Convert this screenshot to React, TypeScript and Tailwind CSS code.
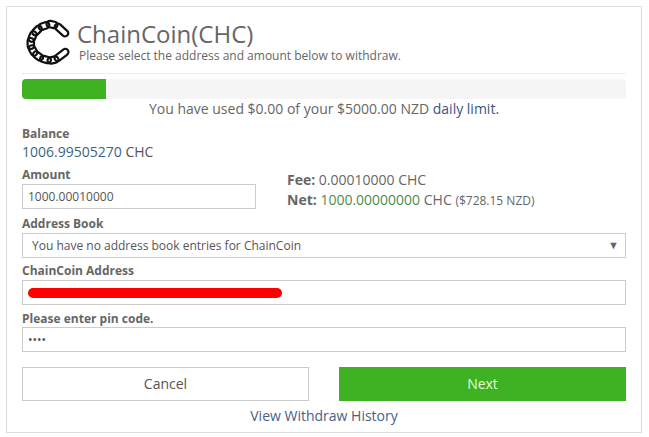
import { FC } from "react";

const font = "font-['Open_Sans',sans-serif]";

const ChainLink: FC<{ x: number; y: number; angle: number; length?: number }> = ({ x, y, angle, length = 11 }) => (
  <rect
    x={x - length / 2}
    y={y - 3.2}
    width={length}
    height={6.4}
    rx={3.2}
    fill="none"
    stroke="#111"
    strokeWidth={2.2}
    transform={`rotate(${angle} ${x} ${y})`}
  />
);

const Logo: FC = () => (
  <svg width="44" height="46" viewBox="0 0 44 46" className="shrink-0">
    <ChainLink x={35.5} y={11} angle={42} length={16} />
    <ChainLink x={26} y={5.5} angle={10} />
    <ChainLink x={18} y={7} angle={-20} />
    <ChainLink x={11} y={11.5} angle={-45} />
    <ChainLink x={6.5} y={17.5} angle={-68} />
    <ChainLink x={4.8} y={24.5} angle={88} />
    <ChainLink x={7} y={31.5} angle={62} />
    <ChainLink x={12} y={37} angle={38} />
    <ChainLink x={19.5} y={40.5} angle={14} />
    <ChainLink x={27} y={41} angle={-12} />
    <ChainLink x={35.5} y={36} angle={-38} length={16} />
  </svg>
);

const Label: FC<{ text: string; className?: string }> = ({ text, className = "" }) => (
  <div className={`text-[12px] leading-[17px] font-bold text-[#666] ${className}`}>{text}</div>
);

const Field: FC<{ children?: React.ReactNode; className?: string }> = ({ children, className = "" }) => (
  <div className={`h-[25px] border border-[#ccc] bg-white flex items-center text-[12px] text-[#555] ${className}`}>
    {children}
  </div>
);

export default function App() {
  return (
    <div className={`${font} w-[649px] h-[437px] bg-white pt-[6px] pl-[6px] text-[#555]`}>
      <div className="w-[636px] h-[427px] border border-[#ddd] px-[15px] pt-[12px]">
        <div className="flex h-[47px] pl-[4px]">
          <Logo />
          <div className="ml-[7px]">
            <div className="text-[24px] leading-[30px] text-[#666]">ChainCoin(CHC)</div>
            <div className="ml-[2px] text-[12px] leading-[16px] mt-[-1px] text-[#666]">
              Please select the address and amount below to withdraw.
            </div>
          </div>
        </div>
        <div className="mt-[7px] border-t border-[#eee]" />
        <div className="mt-[5px] h-[20px] rounded-[4px] bg-[#f5f5f5] overflow-hidden">
          <div className="h-full w-[84px] bg-[#3eb223]" />
        </div>
        <div className="text-center text-[14px] leading-[20px] text-[#666]">
          You have used $0.00 of your $5000.00 NZD <span className="text-[#3b5480]">daily limit.</span>
        </div>
        <Label text="Balance" className="mt-[6px]" />
        <div className="text-[14px] leading-[20px] text-[#3a6485]">
          1006.99505270 <span className="text-[#555]">CHC</span>
        </div>
        <div className="mt-[4px] flex h-[43px]">
          <div className="w-[234px]">
            <Label text="Amount" />
            <Field className="mt-[1px] px-[5px]">1000.00010000</Field>
          </div>
          <div className="ml-[31px] text-[14px] leading-[20px] pt-[4px] text-[#666]">
            <div>
              <b className="font-bold">Fee:</b> 0.00010000 CHC
            </div>
            <div>
              <b className="font-bold">Net:</b> <span className="text-[#4f8a50]">1000.00000000</span> CHC{" "}
              <span className="text-[12px]">($728.15 NZD)</span>
            </div>
          </div>
        </div>
        <Label text="Address Book" className="mt-[6px]" />
        <Field className="justify-between pl-[9px] pr-[6px] mt-[1px]">
          <span>You have no address book entries for ChainCoin</span>
          <span className="text-[11px] text-[#666]">▼</span>
        </Field>
        <Label text="ChainCoin Address" className="mt-[4px]" />
        <Field className="mt-[1px] px-[5px]">
          <div className="h-[10px] w-[254px] rounded-full bg-[#f00]" />
        </Field>
        <Label text="Please enter pin code." className="mt-[5px]" />
        <Field className="px-[5px] text-[10px]">••••</Field>
        <div className="mt-[15px] flex justify-between">
          <div className="h-[34px] w-[287px] border border-[#ccc] pb-[1px] flex items-center justify-center text-[14px] text-[#555]">
            Cancel
          </div>
          <div className="h-[34px] w-[287px] bg-[#3eb223] pb-[1px] flex items-center justify-center text-[14px] font-medium text-[#e4fbd8]">
            Next
          </div>
        </div>
        <div className="mt-[5px] text-center text-[14px] leading-[20px] text-[#4a6185]">View Withdraw History</div>
      </div>
    </div>
  );
}
